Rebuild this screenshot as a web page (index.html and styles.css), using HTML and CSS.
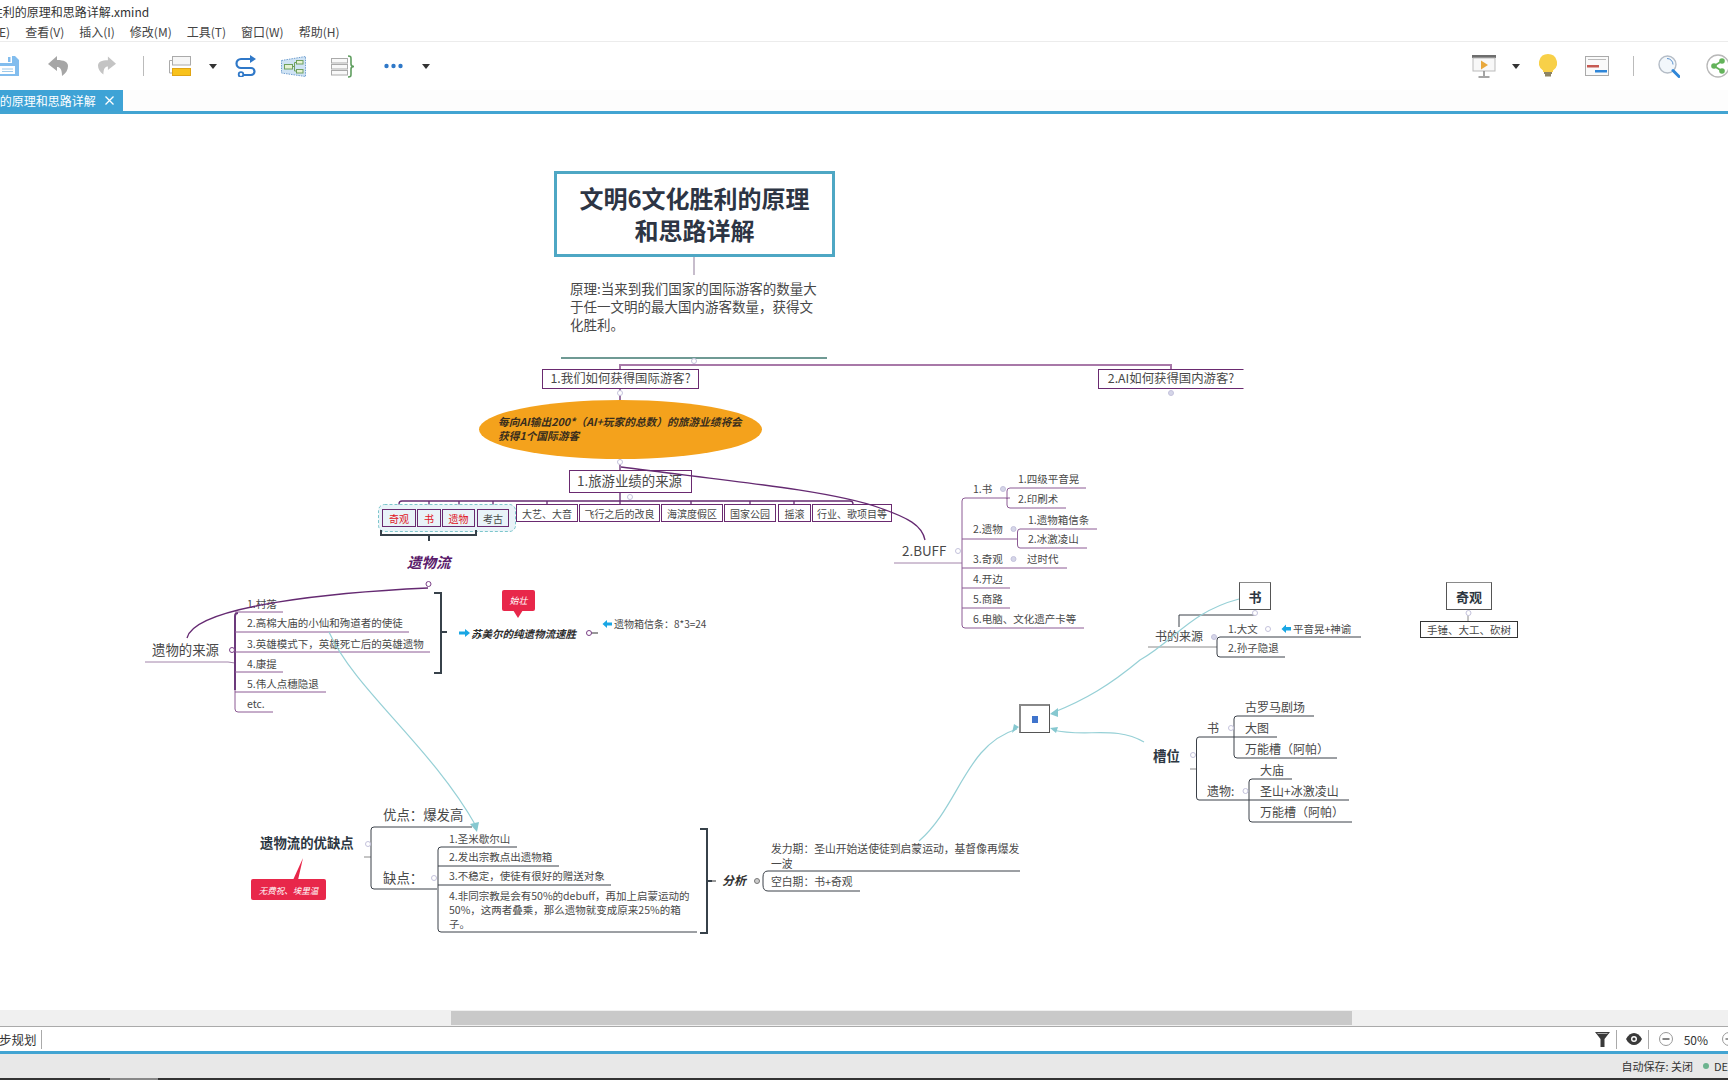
FILE: index.html
```html
<!DOCTYPE html>
<html lang="zh-CN">
<head>
<meta charset="utf-8">
<title>文明6文化胜利的原理和思路详解.xmind</title>
<link rel="stylesheet" href="styles.css">
</head>
<body>
<div class="app">
  <div class="titlebar"><span class="title-text">文明6文化胜利的原理和思路详解.xmind</span></div>
  <nav class="menubar">
    <span class="menu-first">编辑(E)</span><span>查看(V)</span><span>插入(I)</span><span>修改(M)</span><span>工具(T)</span><span>窗口(W)</span><span>帮助(H)</span>
  </nav>
  <div class="toolbar">
    <svg class="i-save" width="20" height="20" viewBox="0 0 20 20"><path d="M-3 0h18l4 4v16H-3z" fill="#82bdee"/><rect x="0" y="0" width="12" height="7" fill="#fff"/><rect x="8" y="1" width="2.500" height="5" fill="#82bdee"/><rect x="0" y="10" width="15" height="8" fill="#fff"/><path d="M2 13h11M2 15.500h11" stroke="#9cc9ea"/></svg>
    <svg class="i-undo" width="20" height="21" viewBox="0 0 20 21"><path d="M9 0 0 8l9 7v-4c3 0 5 2 5 9 4-3 6-6 6-10 0-4-4-6-11-6z" fill="#a6a6a6"/></svg>
    <svg class="i-redo" width="18" height="20" viewBox="0 0 20 21"><path d="M11 0l9 8-9 7v-4C8 11 6 13 6 20 2 17 0 14 0 10 0 6 4 4 11 4z" fill="#c4c4c4"/></svg>
    <span class="i-sep i-sep1"></span>
    <svg class="i-style" width="22" height="20" viewBox="0 0 22 20"><rect x="3.500" y="0.500" width="18" height="8.500" fill="#f6f6f6" stroke="#aaa"/><path d="M3.500 4.500H.5V17H3" fill="none" stroke="#aaa"/><rect x="3.500" y="12.500" width="18" height="7" fill="#f8c21c" stroke="#e0a414"/></svg>
    <svg class="i-caret i-c1" width="8" height="5" viewBox="0 0 8 5"><path d="M0 0h8L4 5z" fill="#333"/></svg>
    <svg class="i-loop" width="24" height="22" viewBox="0 0 24 22"><path d="M18 4H7a4.500 4.500 0 0 0 0 9h10a3.500 3.500 0 0 1 0 7H9" fill="none" stroke="#2f78c8" stroke-width="2.200"/><path d="M16 0l6 4-6 4z" fill="#2f78c8"/><circle cx="7" cy="19.500" r="2.300" fill="#fff" stroke="#2f78c8" stroke-width="1.800"/></svg>
    <svg class="i-bound" width="25" height="21" viewBox="0 0 25 21"><path d="M0.500 4.500 24.500 0.500V20.500L0.500 17z" fill="#cfe3f4" stroke="#6f9ed0" stroke-dasharray="1.500 1"/><rect x="3.500" y="8.500" width="8" height="4.500" fill="#e6f2d4" stroke="#6fa05c"/><rect x="15.500" y="4.500" width="6.500" height="3.500" fill="#e6f2d4" stroke="#6fa05c"/><rect x="15.500" y="13.500" width="6.500" height="3.500" fill="#e6f2d4" stroke="#6fa05c"/><path d="M11.500 10.500h2M13.500 6.500v8.500M13.500 6.500h2M13.500 15h2" stroke="#6fa05c" fill="none"/></svg>
    <svg class="i-sum" width="25" height="23" viewBox="0 0 25 23"><rect x="0.500" y="3.500" width="16" height="4.500" fill="#f8f8f8" stroke="#aaa"/><rect x="0.500" y="9.500" width="16" height="4.500" fill="#f8f8f8" stroke="#aaa"/><rect x="0.500" y="15.500" width="16" height="4.500" fill="#f8f8f8" stroke="#aaa"/><path d="M17 1c3 0 3 1 3 3v5c0 2 1 2.500 3 2.500-2 0-3 .5-3 2.500v5c0 2 0 3-3 3" fill="none" stroke="#5f9e5f" stroke-width="1.600"/></svg>
    <svg class="i-dots" width="19" height="6" viewBox="0 0 19 6"><circle cx="2.500" cy="3" r="2.200" fill="#2f78c8"/><circle cx="9.500" cy="3" r="2.200" fill="#2f78c8"/><circle cx="16.500" cy="3" r="2.200" fill="#2f78c8"/></svg>
    <svg class="i-caret i-c2" width="8" height="5" viewBox="0 0 8 5"><path d="M0 0h8L4 5z" fill="#333"/></svg>
    <svg class="i-present" width="24" height="23" viewBox="0 0 24 23"><rect x="0" y="0" width="24" height="3" fill="#6e6e6e"/><rect x="1" y="3" width="22" height="13" fill="#f8f8f8" stroke="#bbb"/><path d="M9 5.500l7 4.500-7 4.500z" fill="#e8a83c"/><path d="M12 16v5M6.500 22h11" stroke="#888" stroke-width="1.500"/></svg>
    <svg class="i-caret i-c3" width="8" height="5" viewBox="0 0 8 5"><path d="M0 0h8L4 5z" fill="#333"/></svg>
    <svg class="i-bulb" width="18" height="24" viewBox="0 0 18 24"><path d="M9 0a9 9 0 0 1 5 16.500V18H4v-1.500A9 9 0 0 1 9 0z" fill="#f8d048"/><path d="M5 18h8v2H5zM6 20h6v2.500H6z" fill="#8d8464"/></svg>
    <svg class="i-gantt" width="24" height="20" viewBox="0 0 24 20"><rect x="0.500" y="0.500" width="23" height="19" fill="#fafafa" stroke="#aaa"/><path d="M3 3.500h18" stroke="#bbb"/><rect x="2" y="9" width="12" height="2.500" fill="#c65a52"/><rect x="10" y="14" width="12" height="2.500" fill="#2f86d8"/></svg>
    <span class="i-sep i-sep2"></span>
    <svg class="i-search" width="22" height="23" viewBox="0 0 22 23"><circle cx="9.500" cy="9.500" r="8.500" fill="#f2f7fb" stroke="#b4bcc6" stroke-width="1.400"/><path d="M9 3.500a6 6 0 0 1 6 6" fill="none" stroke="#5a92d0"/><path d="M15 15.500l6 6" stroke="#2f86d8" stroke-width="3" stroke-linecap="round"/></svg>
    <svg class="i-share" width="24" height="24" viewBox="0 0 24 24"><circle cx="12" cy="12" r="11" fill="#fff" stroke="#b8b8b8" stroke-width="1.300"/><path d="M16 7 8 12l8 5" fill="none" stroke="#63b35a" stroke-width="1.800"/><circle cx="16" cy="7" r="2.800" fill="#63b35a"/><circle cx="8" cy="12" r="2.800" fill="#63b35a"/><circle cx="16" cy="17" r="2.800" fill="#63b35a"/></svg>
  </div>
  <div class="tabbar">
    <div class="tab">
      <span class="tab-text">文明6文化胜利的原理和思路详解</span>
      <svg class="tab-x" width="9" height="9" viewBox="0 0 9 9"><path d="M.5.5l8 8M8.500.5l-8 8" stroke="#fff" stroke-width="1.300"/></svg>
    </div>
  </div>
  <div class="blue-line"></div>

  <main class="canvas">
    <div class="map">
      <svg class="wires" width="1728" height="1080" viewBox="0 0 1728 1080">
        <path class="w-root" d="M694 257V275"/>
        <path class="w-rule" d="M561 358H827"/>
        <path class="w-lil" d="M620 369V365H1171V369"/>
        <path class="w-pur" d="M620 389V400"/>
        <path class="w-pur" d="M620 459V470"/>
        <path class="w-pur" d="M399 509V504Q399 501 402 501H850Q853 501 853 504"/>
        <path class="w-pur" d="M429 501V509M459 501V509M493 501V509M547 501V504M620 493V504M691 501V504M750 501V504M794 501V504"/>
        <rect class="w-group" x="378.500" y="504.500" width="137" height="27" rx="6"/>
        <path class="w-brk" d="M381 530V535H476V530M429 535V541"/>

        <path class="w-pu2" d="M145 662H228L235 663"/>
        <path class="w-spine" d="M235 690V616Q235 613 238 613"/>
        <path class="w-pu1" d="M235 690V709Q235 712 238 712H273"/>
        <path class="w-pu1" d="M235 612H283M235 632H409M235 652H430M235 672H283M235 692H326"/>
        <path class="w-brk" d="M434 593H441V673H434M441 632H447"/>
        <path class="w-mid" d="M589 633H598"/>

        <path class="w-gry" d="M364 857H371"/>
        <path class="w-dk1" d="M472 827H374Q371 827 371 830V886Q371 889 374 889H437"/>
        <path class="w-dk1" d="M517 847H441Q438 847 438 850V929Q438 932 441 932H697"/>
        <path class="w-dk1" d="M438 866H559M438 885H611"/>
        <path class="w-brk" d="M700 829H707V933H700M707 881H712"/>
        <path class="w-dk1" d="M1020 871H768Q763 871 763 877V885Q763 891 768 891H860"/>
        <path class="w-mid" d="M712 881H716"/>

        <path class="w-pu2" d="M894 563H962"/>
        <path class="w-pu1" d="M1010 498H965Q962 498 962 501V625Q962 628 965 628H1084"/>
        <path class="w-pu1" d="M962 539H1017M962 568H1067M962 588H1010M962 608H1010"/>
        <path class="w-pu1" d="M1086 488H1010Q1007 488 1007 491V505Q1007 508 1010 508H1066M1007 498V499"/>
        <path class="w-pu1" d="M1097 529H1020Q1017.500 529 1017.500 532V545Q1017.500 548 1020 548H1087"/>

        <path class="w-dk1" d="M1255 615H1179V627"/>
        <path class="w-gry" d="M1148 647H1217"/>
        <path class="w-dk1" d="M1361 637H1220Q1217 637 1217 640V654Q1217 657 1220 657H1285"/>
        <path class="w-gry" d="M1468 612V621"/>

        <path class="w-gry" d="M1190 769H1197"/>
        <path class="w-dk1" d="M1277 737H1199Q1196.500 737 1196.500 740V797Q1196.500 800 1199 800H1349"/>
        <path class="w-dk1" d="M1314 716H1237Q1234 716 1234 719V755Q1234 758 1237 758H1337"/>
        <path class="w-dk1" d="M1292 779H1252Q1249 779 1249 782V819Q1249 822 1252 822H1352"/>

        <circle class="dot" cx="694" cy="361" r="2.500"/>
        <circle class="dot" cx="620" cy="393" r="2.500"/>
        <circle class="dot dot-on" cx="1171" cy="393" r="2.500"/>
        <circle class="dot" cx="620" cy="462" r="2.500"/>
        <circle class="dot" cx="630" cy="497" r="2.500"/>
        <circle class="dot dot-pu" cx="428.500" cy="584" r="2.500"/>
        <circle class="dot dot-pu" cx="232" cy="650" r="2.500"/>
        <circle class="dot dot-pu" cx="589" cy="633" r="2.500"/>
        <circle class="dot" cx="368" cy="844" r="2.500"/>
        <circle class="dot" cx="434" cy="878" r="2.500"/>
        <circle class="dot dot-gr" cx="757" cy="881" r="2.500"/>
        <circle class="dot" cx="958" cy="551" r="2.500"/>
        <circle class="dot dot-on" cx="1003" cy="489" r="2.500"/>
        <circle class="dot dot-on" cx="1013.500" cy="529" r="2.500"/>
        <circle class="dot dot-on" cx="1013.500" cy="559" r="2.500"/>
        <circle class="dot" cx="1255" cy="613" r="2.500"/>
        <circle class="dot dot-on" cx="1214" cy="637" r="2.500"/>
        <circle class="dot" cx="1268" cy="629" r="2.500"/>
        <circle class="dot" cx="1468.500" cy="613" r="2.500"/>
        <circle class="dot" cx="1193" cy="755" r="2.500"/>
        <circle class="dot" cx="1231" cy="728" r="2.500"/>
        <circle class="dot" cx="1245.500" cy="791" r="2.500"/>

        <path class="w-flag" d="M459 631.500h6v-2.500l5 4-5 4v-2.500h-6z"/>
        <path class="w-flag" d="M612 622.500h-5v-2.500l-4.500 4 4.500 4v-2.500h5z"/>
        <path class="w-flag" d="M1291 627h-5v-2.500l-4.500 4.500 4.500 4v-2.500h5z"/>
        <path class="w-red" d="M293 880L303 858L298 880z"/>
        <path class="w-red" d="M513 610L518 618L523 610z"/>
      </svg>

      <div class="node root">文明6文化胜利的原理<br>和思路详解</div>
      <div class="t note">原理:当来到我们国家的国际游客的数量大<br>于任一文明的最大国内游客数量，获得文<br>化胜利。</div>

      <div class="node box b-q1">1.我们如何获得国际游客?</div>
      <div class="node box b-q2">2.AI如何获得国内游客?</div>
      <div class="ellipse">每向AI输出200*（AI+玩家的总数）的旅游业绩将会<br>获得1个国际游客</div>
      <div class="node box b-src">1.旅游业绩的来源</div>

      <div class="node cell on c-wonder red">奇观</div>
      <div class="node cell on c-book red">书</div>
      <div class="node cell on c-relic red">遗物</div>
      <div class="node cell on c-arch">考古</div>
      <div class="node cell c-art">大艺、大音</div>
      <div class="node cell c-fly">飞行之后的改良</div>
      <div class="node cell c-sea">海滨度假区</div>
      <div class="node cell c-park">国家公园</div>
      <div class="node cell c-rock">摇滚</div>
      <div class="node cell c-ind">行业、歌项目等</div>

      <div class="t relic-flow">遗物流</div>
      <div class="t s134 a-srcs">遗物的来源</div>
      <div class="t s105 a1">1.村落</div>
      <div class="t s105 a2">2.高棉大庙的小仙和殉道者的使徒</div>
      <div class="t s105 a3">3.英雄模式下，英雄死亡后的英雄遗物</div>
      <div class="t s105 a4">4.康提</div>
      <div class="t s105 a5">5.伟人点穗隐退</div>
      <div class="t s105 a6">etc.</div>
      <div class="t s105 it a-win">苏美尔的纯遗物流速胜</div>
      <div class="t s10 a-box">遗物箱信条：8*3=24</div>
      <div class="callout co-top">始壮</div>

      <div class="t sbold b-title">遗物流的优缺点</div>
      <div class="t s134 b-good">优点：爆发高</div>
      <div class="t s134 b-bad">缺点：</div>
      <div class="t s105 b1">1.圣米歇尔山</div>
      <div class="t s105 b2">2.发出宗教点出遗物箱</div>
      <div class="t s105 b3">3.不稳定，使徒有很好的赠送对象</div>
      <div class="t s105 b4">4.非同宗教是会有50%的debuff，再加上启蒙运动的<br>50%，这两者叠乘，那么遗物就变成原来25%的箱<br>子。</div>
      <div class="callout co-low">无费祝、埃里温</div>

      <div class="t analysis">分析</div>
      <div class="t s108 d1">发力期：圣山开始送使徒到启蒙运动，基督像再爆发<br>一波</div>
      <div class="t s108 d2">空白期：书+奇观</div>

      <div class="node mini"><span class="mini-mark"></span></div>

      <div class="t s134 e-buff">2.BUFF</div>
      <div class="t s105 e1">1.书</div>
      <div class="t s105 e11">1.四级平音晃</div>
      <div class="t s105 e12">2.印刷术</div>
      <div class="t s105 e2">2.遗物</div>
      <div class="t s105 e21">1.遗物箱信条</div>
      <div class="t s105 e22">2.冰激凌山</div>
      <div class="t s105 e3">3.奇观</div>
      <div class="t s105 e31">过时代</div>
      <div class="t s105 e4">4.开边</div>
      <div class="t s105 e5">5.商路</div>
      <div class="t s105 e6">6.电脑、文化遗产卡等</div>

      <div class="node head f-book">书</div>
      <div class="node head f-wonder">奇观</div>
      <div class="node tools">手锤、大工、砍树</div>
      <div class="t s12 g-src">书的来源</div>
      <div class="t s105 g1">1.大文</div>
      <div class="t s105 g11">平音晃+神谕</div>
      <div class="t s105 g2">2.孙子隐退</div>

      <div class="t sbold h-slot">槽位</div>
      <div class="t s12 h-book">书</div>
      <div class="t s12 h1">古罗马剧场</div>
      <div class="t s12 h2">大图</div>
      <div class="t s12 h3">万能槽（阿帕）</div>
      <div class="t s12 h-relic">遗物:</div>
      <div class="t s12 h4">大庙</div>
      <div class="t s12 h5">圣山+冰激凌山</div>
      <div class="t s12 h6">万能槽（阿帕）</div>

      <svg class="wires" width="1728" height="1080" viewBox="0 0 1728 1080">
        <path class="w-pur" d="M621 467C720 480 830 490 880 508C908 518 922 525 925 540"/>
        <path class="w-pur" d="M428 588C340 592 195 605 187 638"/>
        <path class="w-teal" d="M329 632C355 690 430 745 476 826"/>
        <path class="w-arrow" d="M477 832L470 824L479 822z"/>
        <path class="w-teal" d="M919 841C960 805 965 745 1017 729"/>
        <path class="w-arrow" d="M1019 727L1012 733L1014 724z"/>
        <path class="w-teal" d="M1239 599C1190 612 1175 640 1140 660C1110 685 1085 700 1052 713"/>
        <path class="w-arrow" d="M1050 714L1058 708L1058 717z"/>
        <path class="w-teal" d="M1144 742C1115 725 1085 738 1053 730"/>
        <path class="w-arrow" d="M1050 728L1058 727L1056 733z"/>
      </svg>
    </div>
  </main>

  <div class="hscroll"><div class="hthumb"></div></div>
  <div class="bottom">
    <span class="clip-label">下一步规划</span>
    <span class="vsep"></span>
    <svg class="b-filter" width="15" height="15" viewBox="0 0 15 15"><path d="M0 0h15L9.500 7v8h-4V7z" fill="#3a3a3a"/><path d="M2.500 1.500h10" stroke="#aaa"/></svg>
    <span class="vsep vs1"></span>
    <svg class="b-eye" width="16" height="12" viewBox="0 0 16 12"><path d="M0 6c4-8 12-8 16 0-4 8-12 8-16 0z" fill="#3a3a3a"/><circle cx="8" cy="6" r="3" fill="#fff"/><circle cx="8" cy="6" r="1.600" fill="#3a3a3a"/></svg>
    <span class="vsep vs2"></span>
    <svg class="b-minus" width="14" height="14" viewBox="0 0 14 14"><circle cx="7" cy="7" r="6.500" fill="#fff" stroke="#999"/><path d="M3.500 7h7" stroke="#333" stroke-width="1.200"/></svg>
    <span class="zoom-val">50%</span>
    <svg class="b-plus" width="14" height="14" viewBox="0 0 14 14"><circle cx="7" cy="7" r="6.500" fill="#fff" stroke="#999"/><path d="M3.500 7h7M7 3.500v7" stroke="#333" stroke-width="1.200"/></svg>
  </div>
  <div class="blue-line"></div>
  <footer class="status">
    <span>自动保存: 关闭</span>
    <span class="status-dot"></span>
    <span class="status-user">DE</span>
  </footer>
  <div class="taskbar"><span class="task-item"></span></div>
</div>
</body>
</html>
```

FILE: styles.css
```css
* { box-sizing: border-box; }
html, body { margin: 0; padding: 0; background: #fff; }
body { font-family: "Noto Sans CJK SC", "Noto Sans", sans-serif; color: #333; }
.app { width: 1728px; height: 1080px; overflow: hidden; display: flex; flex-direction: column; }

.titlebar { height: 22px; flex: none; display: flex; align-items: center; overflow: hidden; white-space: nowrap; }
.title-text { margin-left: -64px; font-size: 12px; color: #333; }

.menubar { height: 20px; flex: none; display: flex; align-items: center; gap: 15px; font-size: 12px; color: #444; border-bottom: 1px solid #ececec; white-space: nowrap; overflow: hidden; }
.menu-first { margin-left: -29px; }

.toolbar { height: 48px; flex: none; display: flex; align-items: center; overflow: hidden; }
.toolbar svg, .toolbar span { flex: none; }
.i-undo { margin-left: 28px; }
.i-redo { margin-left: 30px; }
.i-sep { width: 1px; height: 20px; background: #bbb; }
.i-sep1 { margin-left: 27px; }
.i-style { margin-left: 25px; }
.i-c1 { margin-left: 18px; }
.i-loop { margin-left: 17px; }
.i-bound { margin-left: 23px; }
.i-sum { margin-left: 25px; }
.i-dots { margin-left: 28px; }
.i-c2 { margin-left: 19px; }
.i-present { margin-left: auto; }
.i-c3 { margin-left: 16px; }
.i-bulb { margin-left: 19px; }
.i-gantt { margin-left: 28px; }
.i-sep2 { margin-left: 24px; }
.i-search { margin-left: 24px; }
.i-share { margin-left: 26px; margin-right: -2px; }

.tabbar { height: 21px; flex: none; background: #fdfdfd; display: flex; }
.tab { width: 123px; background: #3ea3d6; color: #fff; font-size: 12px; display: flex; align-items: center; overflow: hidden; white-space: nowrap; }
.tab-text { margin-left: -79px; flex: none; }
.tab-x { margin-left: 9px; flex: none; }
.blue-line { height: 3px; flex: none; background: #42a4d2; }

.canvas { flex: 1; position: relative; overflow: hidden; background: #fff; }
.map { position: absolute; left: 0; top: -114px; width: 1728px; height: 1080px; }
.wires { position: absolute; left: 0; top: 0; pointer-events: none; }
.wires path, .wires rect { fill: none; }
.w-root { stroke: #c7bdcc; stroke-width: 2; }
.w-rule { stroke: #6f9a94; stroke-width: 2; }
.w-lil { stroke: #a878a8; stroke-width: 2; }
.w-pur { stroke: #652a72; stroke-width: 1.300; }
.w-spine { stroke: #6c3a7c; stroke-width: 2; }
.w-pu1 { stroke: #8c5a94; stroke-width: 1; }
.w-pu2 { stroke: #a284aa; stroke-width: 1; }
.w-mid { stroke: #555; stroke-width: 1.200; }
.w-brk { stroke: #37414a; stroke-width: 2; }
.w-dk1 { stroke: #3a4048; stroke-width: 1; }
.w-gry { stroke: #8a8a8a; stroke-width: 1; }
.w-teal { stroke: #96d0d6; stroke-width: 1.200; }
.wires .w-arrow { fill: #86c8d0; }
.wires .w-group { fill: #e9f3f8; stroke: #7cc6cc; stroke-dasharray: 3 2; }
.wires .w-flag { fill: #19a6e4; }
.wires .w-red { fill: #e8274a; }
.dot { fill: #fff; stroke: #c4c2dc; stroke-width: 1; }
.dot-on { fill: #d5d6e8; }
.dot-pu { stroke: #7a3f86; }
.dot-gr { fill: #ccc; stroke: #777; }

.t { position: absolute; line-height: 14px; white-space: nowrap; color: #484848; }
.s10 { font-size: 10px; }
.s105 { font-size: 10.500px; }
.s108 { font-size: 10.800px; }
.s12 { font-size: 12px; }
.s134 { font-size: 13.400px; }
.sbold { font-size: 13.400px; font-weight: 700; color: #2d3742; }
.it { font-style: italic; font-weight: 700; color: #2c2c2c; }

.node { position: absolute; display: flex; align-items: center; justify-content: center; text-align: center; white-space: nowrap; background: #fff; }
.root { left: 554px; top: 171px; width: 281px; height: 86px; border: 3px solid #4ea7c4; font-size: 24px; font-weight: 700; line-height: 32px; color: #2d3544; }
.note { left: 570px; top: 279px; font-size: 13.500px; line-height: 18px; color: #484848; }

.box { border: 1.500px solid #6a2a70; color: #484848; }
.b-q1 { left: 542px; top: 369px; width: 157px; height: 20px; font-size: 12.400px; padding-bottom: 2px; }
.b-q2 { left: 1098px; top: 369px; width: 146px; height: 20px; font-size: 12.400px; padding-bottom: 2px; border-right-color: transparent; }
.b-src { left: 569px; top: 470px; width: 123px; height: 23px; font-size: 13.400px; padding: 0 2px 3px 0; }

.ellipse { position: absolute; left: 479px; top: 400px; width: 283px; height: 59px; border-radius: 50%; background: #f4a21c; padding: 15px 0 0 19px; font-size: 10.700px; font-weight: 700; font-style: italic; line-height: 14px; color: #3a2e1c; white-space: nowrap; }

.cell { font-size: 10px; border: 1.500px solid #6a2a70; color: #484848; height: 18px; top: 504px; }
.cell.on { top: 509px; background: #e9f3f8; }
.red { color: #e0141e; }
.c-wonder { left: 382px; width: 34px; }
.c-book { left: 417px; width: 24px; }
.c-relic { left: 442px; width: 33px; }
.c-arch { left: 477px; width: 32px; }
.c-art { left: 516px; width: 62px; }
.c-fly { left: 579px; width: 81px; }
.c-sea { left: 661px; width: 62px; }
.c-park { left: 724px; width: 52px; }
.c-rock { left: 778px; width: 33px; }
.c-ind { left: 812px; width: 80px; }

.relic-flow { left: 407px; top: 555px; font-size: 14.500px; font-weight: 700; font-style: italic; color: #5a1a6a; }
.a-srcs { left: 152px; top: 642px; }
.a1 { left: 247px; top: 597px; }
.a2 { left: 247px; top: 616px; }
.a3 { left: 247px; top: 637px; }
.a4 { left: 247px; top: 657px; }
.a5 { left: 247px; top: 677px; }
.a6 { left: 247px; top: 697px; }
.a-win { left: 471px; top: 627px; }
.a-box { left: 614px; top: 617px; }

.callout { position: absolute; display: flex; align-items: center; justify-content: center; background: #e8274a; color: #fff; border-radius: 2px; font-style: italic; font-size: 9px; white-space: nowrap; }
.co-top { left: 502px; top: 590px; width: 33px; height: 21px; }
.co-low { left: 251px; top: 879px; width: 75px; height: 21px; font-size: 8.500px; }

.b-title { left: 260px; top: 835px; }
.b-good { left: 383px; top: 807px; }
.b-bad { left: 383px; top: 870px; }
.b1 { left: 449px; top: 832px; }
.b2 { left: 449px; top: 850px; }
.b3 { left: 449px; top: 869px; }
.b4 { left: 449px; top: 889px; }

.analysis { left: 722px; top: 873px; font-size: 12px; font-weight: 700; font-style: italic; color: #333; }
.d1 { left: 771px; top: 841px; line-height: 15px; }
.d2 { left: 771px; top: 874px; }

.mini { left: 1019px; top: 704px; width: 31px; height: 29px; border: 1.500px solid #555; border-top: 2px solid #888; border-left: 2px solid #888; }
.mini-mark { width: 6px; height: 7px; background: #3f74cc; }

.e-buff { left: 902px; top: 543px; }
.e1 { left: 973px; top: 482px; }
.e11 { left: 1018px; top: 472px; }
.e12 { left: 1018px; top: 492px; }
.e2 { left: 973px; top: 522px; }
.e21 { left: 1028px; top: 513px; }
.e22 { left: 1028px; top: 532px; }
.e3 { left: 973px; top: 552px; }
.e31 { left: 1027px; top: 552px; }
.e4 { left: 973px; top: 572px; }
.e5 { left: 973px; top: 592px; }
.e6 { left: 973px; top: 612px; }

.head { top: 582px; height: 28px; font-size: 13px; font-weight: 700; color: #2d3742; border: 1.500px solid #555; border-top-color: #8a8a8a; }
.f-book { left: 1239px; width: 32px; }
.f-wonder { left: 1446px; width: 46px; }
.tools { left: 1420px; top: 621px; width: 98px; height: 17px; font-size: 10.500px; border: 1px solid #333; color: #484848; }
.g-src { left: 1155px; top: 629px; }
.g1 { left: 1228px; top: 622px; }
.g11 { left: 1293px; top: 622px; }
.g2 { left: 1228px; top: 641px; }

.h-slot { left: 1153px; top: 748px; }
.h-book { left: 1207px; top: 721px; }
.h1 { left: 1245px; top: 700px; }
.h2 { left: 1245px; top: 721px; }
.h3 { left: 1245px; top: 742px; }
.h-relic { left: 1207px; top: 784px; }
.h4 { left: 1260px; top: 763px; }
.h5 { left: 1260px; top: 784px; }
.h6 { left: 1260px; top: 805px; }

.hscroll { height: 16px; flex: none; background: #f0f0f0; padding-top: 1px; }
.hthumb { margin-left: 451px; width: 901px; height: 14px; background: #c9c9c9; }

.bottom { height: 25px; flex: none; display: flex; align-items: center; background: #fff; border-top: 1px solid #aaa; overflow: hidden; white-space: nowrap; }
.clip-label { margin-left: -26px; font-size: 12.500px; color: #333; }
.vsep { width: 1px; height: 19px; background: #aaa; flex: none; margin-left: 4px; }
.b-filter { margin-left: auto; flex: none; }
.vs1 { margin-left: 6px; }
.b-eye { margin-left: 9px; flex: none; }
.vs2 { margin-left: 6px; }
.b-minus { margin-left: 10px; flex: none; }
.zoom-val { margin-left: 11px; font-size: 12px; color: #333; }
.b-plus { margin-left: 14px; margin-right: -8px; flex: none; }

.status { height: 24px; flex: none; display: flex; align-items: center; justify-content: flex-end; background: #e8e8e8; font-size: 11px; color: #333; white-space: nowrap; overflow: hidden; }
.status-dot { width: 6px; height: 6px; border-radius: 50%; background: #6cb38e; margin-left: 10px; flex: none; }
.status-user { margin-left: 5px; }
.taskbar { height: 2px; flex: none; background: #333; }
.task-item { display: block; margin-left: 110px; width: 48px; height: 2px; background: #888; }
```
